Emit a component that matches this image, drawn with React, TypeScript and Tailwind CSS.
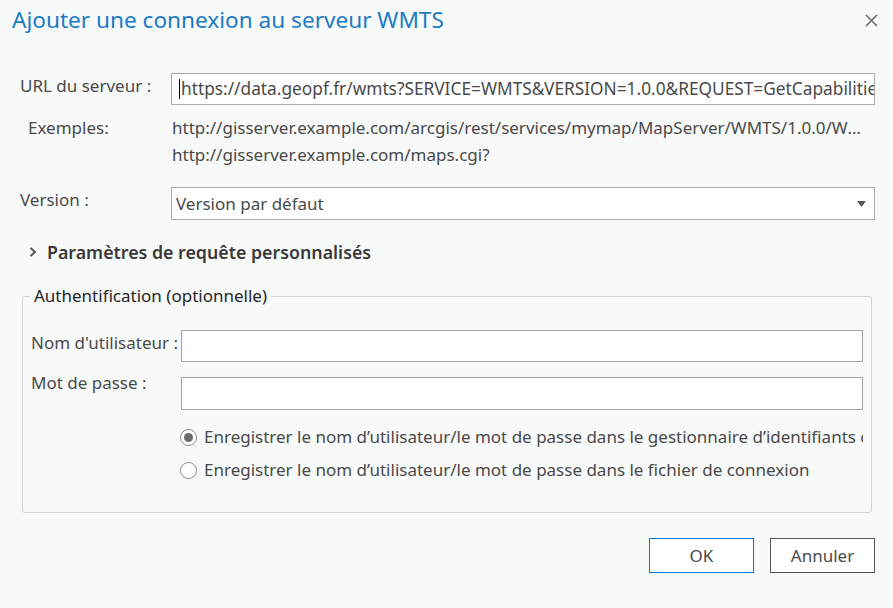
import React from "react";

const font = { fontFamily: '"Noto Sans", "Open Sans", sans-serif' };

export default function App() {
  return (
    <div
      className="w-[893px] h-[608px] bg-[#f8f9f9] text-[#4a4a4a] text-[17px] overflow-hidden relative"
      style={font}
    >
      <div className="flex items-start justify-between pl-[12px] pr-[15px] pt-[4px] h-[48px]">
        <div className="text-[22.6px] text-[#1b7cc4] leading-[32px]">Ajouter une connexion au serveur WMTS</div>
        <svg width="13" height="13" viewBox="0 0 13 13" className="mt-[10px]">
          <path d="M1 1 L12 12 M12 1 L1 12" stroke="#6a6a6a" strokeWidth="1.6" />
        </svg>
      </div>

      <div className="pl-[20px] pr-[18px] pt-[25px] flex flex-col">
        <div className="flex items-start">
          <div className="w-[151px] pt-[2px] leading-[22px] whitespace-nowrap">URL du serveur :</div>
          <div className="flex-1 h-[32px] border border-[#ababab] bg-white flex items-center pl-[7px] overflow-hidden whitespace-nowrap text-[17.3px]">
            <span className="w-px h-[20px] bg-black mr-[1px] shrink-0" />
            <span>https://data.geopf.fr/wmts?SERVICE=WMTS&amp;VERSION=1.0.0&amp;REQUEST=GetCapabilities</span>
          </div>
        </div>

        <div className="flex items-start mt-[9px]">
          <div className="w-[152px] pl-[8px] leading-[27px]">Exemples:</div>
          <div className="flex-1 min-w-0 leading-[27px]">
            <div className="truncate">http://gisserver.example.com/arcgis/rest/services/mymap/MapServer/WMTS/1.0.0/WMTSCapabilities.xml</div>
            <div className="truncate">http://gisserver.example.com/maps.cgi?</div>
          </div>
        </div>

        <div className="flex items-start mt-[19px]">
          <div className="w-[151px] leading-[22px] pt-[2px]">Version :</div>
          <div className="flex-1 h-[33px] border border-[#ababab] bg-white flex items-center justify-between pl-[4px] pr-[8px]">
            <span>Version par défaut</span>
            <svg width="9" height="6" viewBox="0 0 9 6">
              <path d="M0 0 H9 L4.5 6 Z" fill="#555" />
            </svg>
          </div>
        </div>

        <div className="flex items-center mt-[18px] pl-[8px] h-[28px]">
          <svg width="10" height="12" viewBox="0 0 10 12" className="mr-[9px]">
            <path d="M2.5 2 L7 6 L2.5 10" stroke="#555" strokeWidth="2" fill="none" />
          </svg>
          <span className="font-semibold text-[17.8px] text-[#3a3a3a]">Paramètres de requête personnalisés</span>
        </div>

        <div className="relative mt-[30px] ml-[2px] mr-[3px] h-[217px] border border-[#d4d4d4] rounded-[3px] pt-[33px] pl-[8px] pr-[8px]">
          <div className="absolute -top-[13px] left-[7px] px-[4px] bg-[#f8f9f9] leading-[24px] text-[#262626]">Authentification (optionnelle)</div>
          <div className="flex items-start">
            <div className="w-[150px] leading-[26px] whitespace-nowrap">Nom d'utilisateur :</div>
            <div className="flex-1 h-[32px] border border-[#a3a3a3] bg-white" />
          </div>
          <div className="flex items-start mt-[15px]">
            <div className="w-[150px] leading-[26px] -mt-[7px] whitespace-nowrap">Mot de passe :</div>
            <div className="flex-1 h-[33px] border border-[#a3a3a3] bg-white" />
          </div>
          <div className="pl-[149px] mt-[16px] flex flex-col gap-[11px]">
            <div className="flex items-center whitespace-nowrap overflow-hidden h-[22px]">
              <span className="w-[17px] h-[17px] rounded-full border border-[#8a8a8a] bg-white flex items-center justify-center mr-[7px] shrink-0">
                <span className="w-[9px] h-[9px] rounded-full bg-[#6b6b6b]" />
              </span>
              <span>Enregistrer le nom d’utilisateur/le mot de passe dans le gestionnaire d’identifiants de Windows</span>
            </div>
            <div className="flex items-center whitespace-nowrap overflow-hidden h-[22px]">
              <span className="w-[17px] h-[17px] rounded-full border border-[#8a8a8a] bg-white mr-[7px] shrink-0" />
              <span>Enregistrer le nom d’utilisateur/le mot de passe dans le fichier de connexion</span>
            </div>
          </div>
        </div>

        <div className="flex justify-end gap-[16px] mt-[25px]">
          <button className="w-[105px] h-[35px] border border-[#0078d7] bg-white text-[#4a4a4a]">OK</button>
          <button className="w-[105px] h-[35px] border border-[#555] bg-white text-[#4a4a4a]">Annuler</button>
        </div>
      </div>
    </div>
  );
}
